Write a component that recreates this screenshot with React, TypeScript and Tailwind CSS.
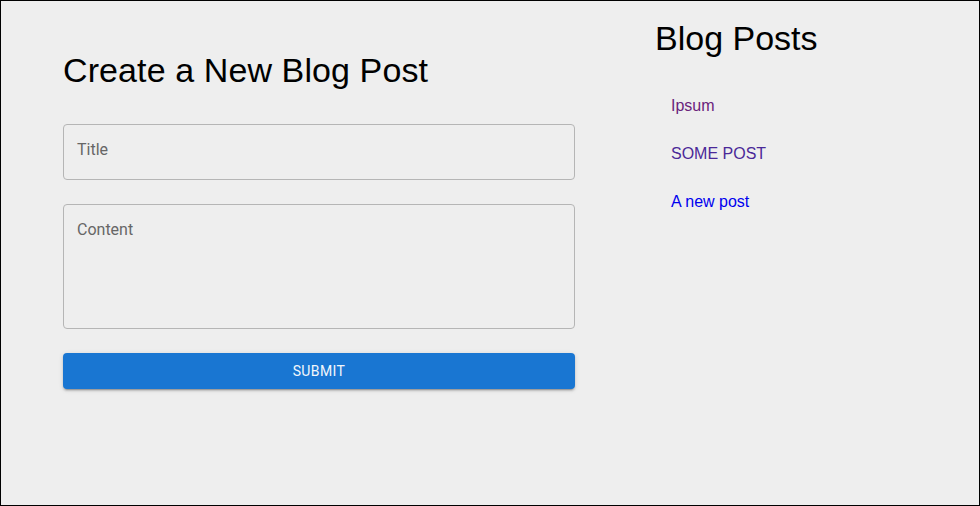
import React from "react";

const posts = [
  { title: "Ipsum", color: "text-[#6a237c]" },
  { title: "SOME POST", color: "text-[#4a2898]" },
  { title: "A new post", color: "text-[#0000ee]" },
];

export default function App() {
  return (
    <div className="w-[980px] h-[506px] border border-black bg-[#eeeeee] flex font-['Liberation_Sans',Arial,sans-serif]">
      {/* Formulaire */}
      <div className="w-[512px] ml-[62px] pt-[48px] flex flex-col">
        <h4 className="text-[34px] leading-[42px] tracking-[0.1px] text-black">Create a New Blog Post</h4>

        <div className="mt-[33px] h-[56px] rounded border border-[#b5b5b5] px-[13px] pt-[13px] font-['Roboto',sans-serif] text-[16px] leading-[23px] text-[#666666]">
          Title
        </div>

        <div className="mt-[24px] h-[125px] rounded border border-[#b5b5b5] px-[13px] pt-[13px] font-['Roboto',sans-serif] text-[16px] leading-[23px] text-[#666666]">
          Content
        </div>

        <button className="mt-[24px] h-[36px] w-full rounded bg-[#1976d2] text-[#f2f6fb] font-['Roboto',sans-serif] text-[14px] tracking-[0.4px] uppercase shadow-[0_3px_1px_-2px_rgba(0,0,0,0.2),0_2px_2px_0_rgba(0,0,0,0.14),0_1px_5px_0_rgba(0,0,0,0.12)]">
          Submit
        </button>
      </div>

      {/* Liste des articles */}
      <div className="ml-[80px] pt-[16px] flex flex-col">
        <h4 className="text-[34px] leading-[42px] text-black">Blog Posts</h4>
        <ul className="mt-[15px] py-[8px]">
          {posts.map((p) => (
            <li key={p.title} className="px-[16px] py-[8px]">
              <a href="#" className={`block my-[4px] text-[16px] leading-[24px] ${p.color}`}>
                {p.title}
              </a>
            </li>
          ))}
        </ul>
      </div>
    </div>
  );
}
